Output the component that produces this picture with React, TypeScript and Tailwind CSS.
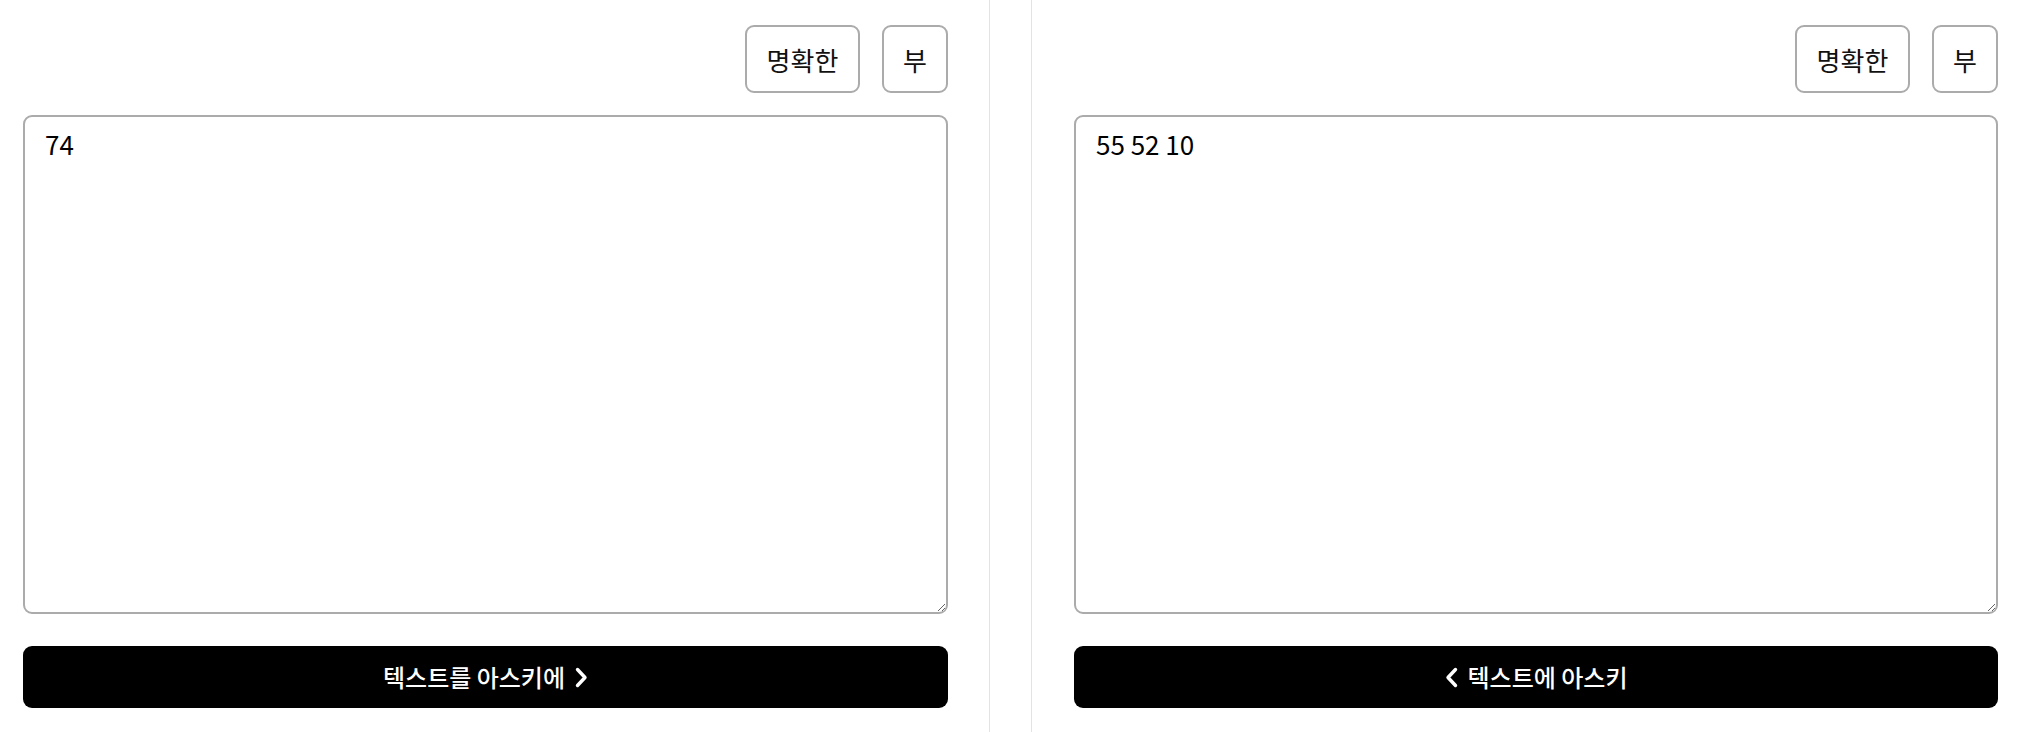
import React, { useState } from "react";

const font = { fontFamily: '"Noto Sans CJK KR", "Noto Sans", sans-serif' };

const ChevronRight = () => (
  <svg width="13" height="21" viewBox="0 0 13 21" fill="none" className="ml-[10px]">
    <path d="M2.5 2.5 L10 10.5 L2.5 18.5" stroke="white" strokeWidth="3.4" strokeLinecap="round" strokeLinejoin="round" />
  </svg>
);

const ChevronLeft = () => (
  <svg width="13" height="21" viewBox="0 0 13 21" fill="none" className="mr-[10px]">
    <path d="M10.5 2.5 L3 10.5 L10.5 18.5" stroke="white" strokeWidth="3.4" strokeLinecap="round" strokeLinejoin="round" />
  </svg>
);

type PanelProps = {
  initial: string;
  dir: "right" | "left";
  label: string;
  className: string;
};

const Panel = ({ initial, dir, label, className }: PanelProps) => {
  const [value, setValue] = useState<string>(initial);

  return (
    <div className={className}>
      <div className="flex justify-end gap-[22px] pt-[25px]">
        <button
          className="h-[68px] w-[115px] rounded-[9px] border-2 border-[#ababab] bg-white text-[26px] text-[#111]"
          onClick={() => setValue("")}
        >
          명확한
        </button>
        <button className="h-[68px] w-[66px] rounded-[9px] border-2 border-[#ababab] bg-white text-[26px] text-[#111]">
          부
        </button>
      </div>
      <textarea
        className="mt-[22px] block h-[499px] w-full rounded-[9px] border-2 border-[#ababab] px-[20px] pt-[7px] pb-[12px] text-[26px] leading-[1.5] text-black outline-none"
        value={value}
        onChange={(e) => setValue(e.target.value)}
      />
      <button className="mt-[32px] flex h-[62px] w-full items-center justify-center rounded-[9px] bg-black text-[24px] font-medium text-white">
        {dir === "left" && <ChevronLeft />}
        <span>{label}</span>
        {dir === "right" && <ChevronRight />}
      </button>
    </div>
  );
};

const App = () => {
  return (
    <div className="flex min-h-screen w-full bg-white" style={font}>
      <Panel
        initial="74"
        dir="right"
        label="텍스트를 아스키에"
        className="w-[990px] shrink-0 border-r border-[#e3e3e3] pl-[23px] pr-[41px]"
      />
      <div className="w-[41px] shrink-0" />
      <Panel
        initial="55 52 10"
        dir="left"
        label="텍스트에 아스키"
        className="flex-1 border-l border-[#e3e3e3] pl-[42px] pr-[20px]"
      />
    </div>
  );
};

export default App;
